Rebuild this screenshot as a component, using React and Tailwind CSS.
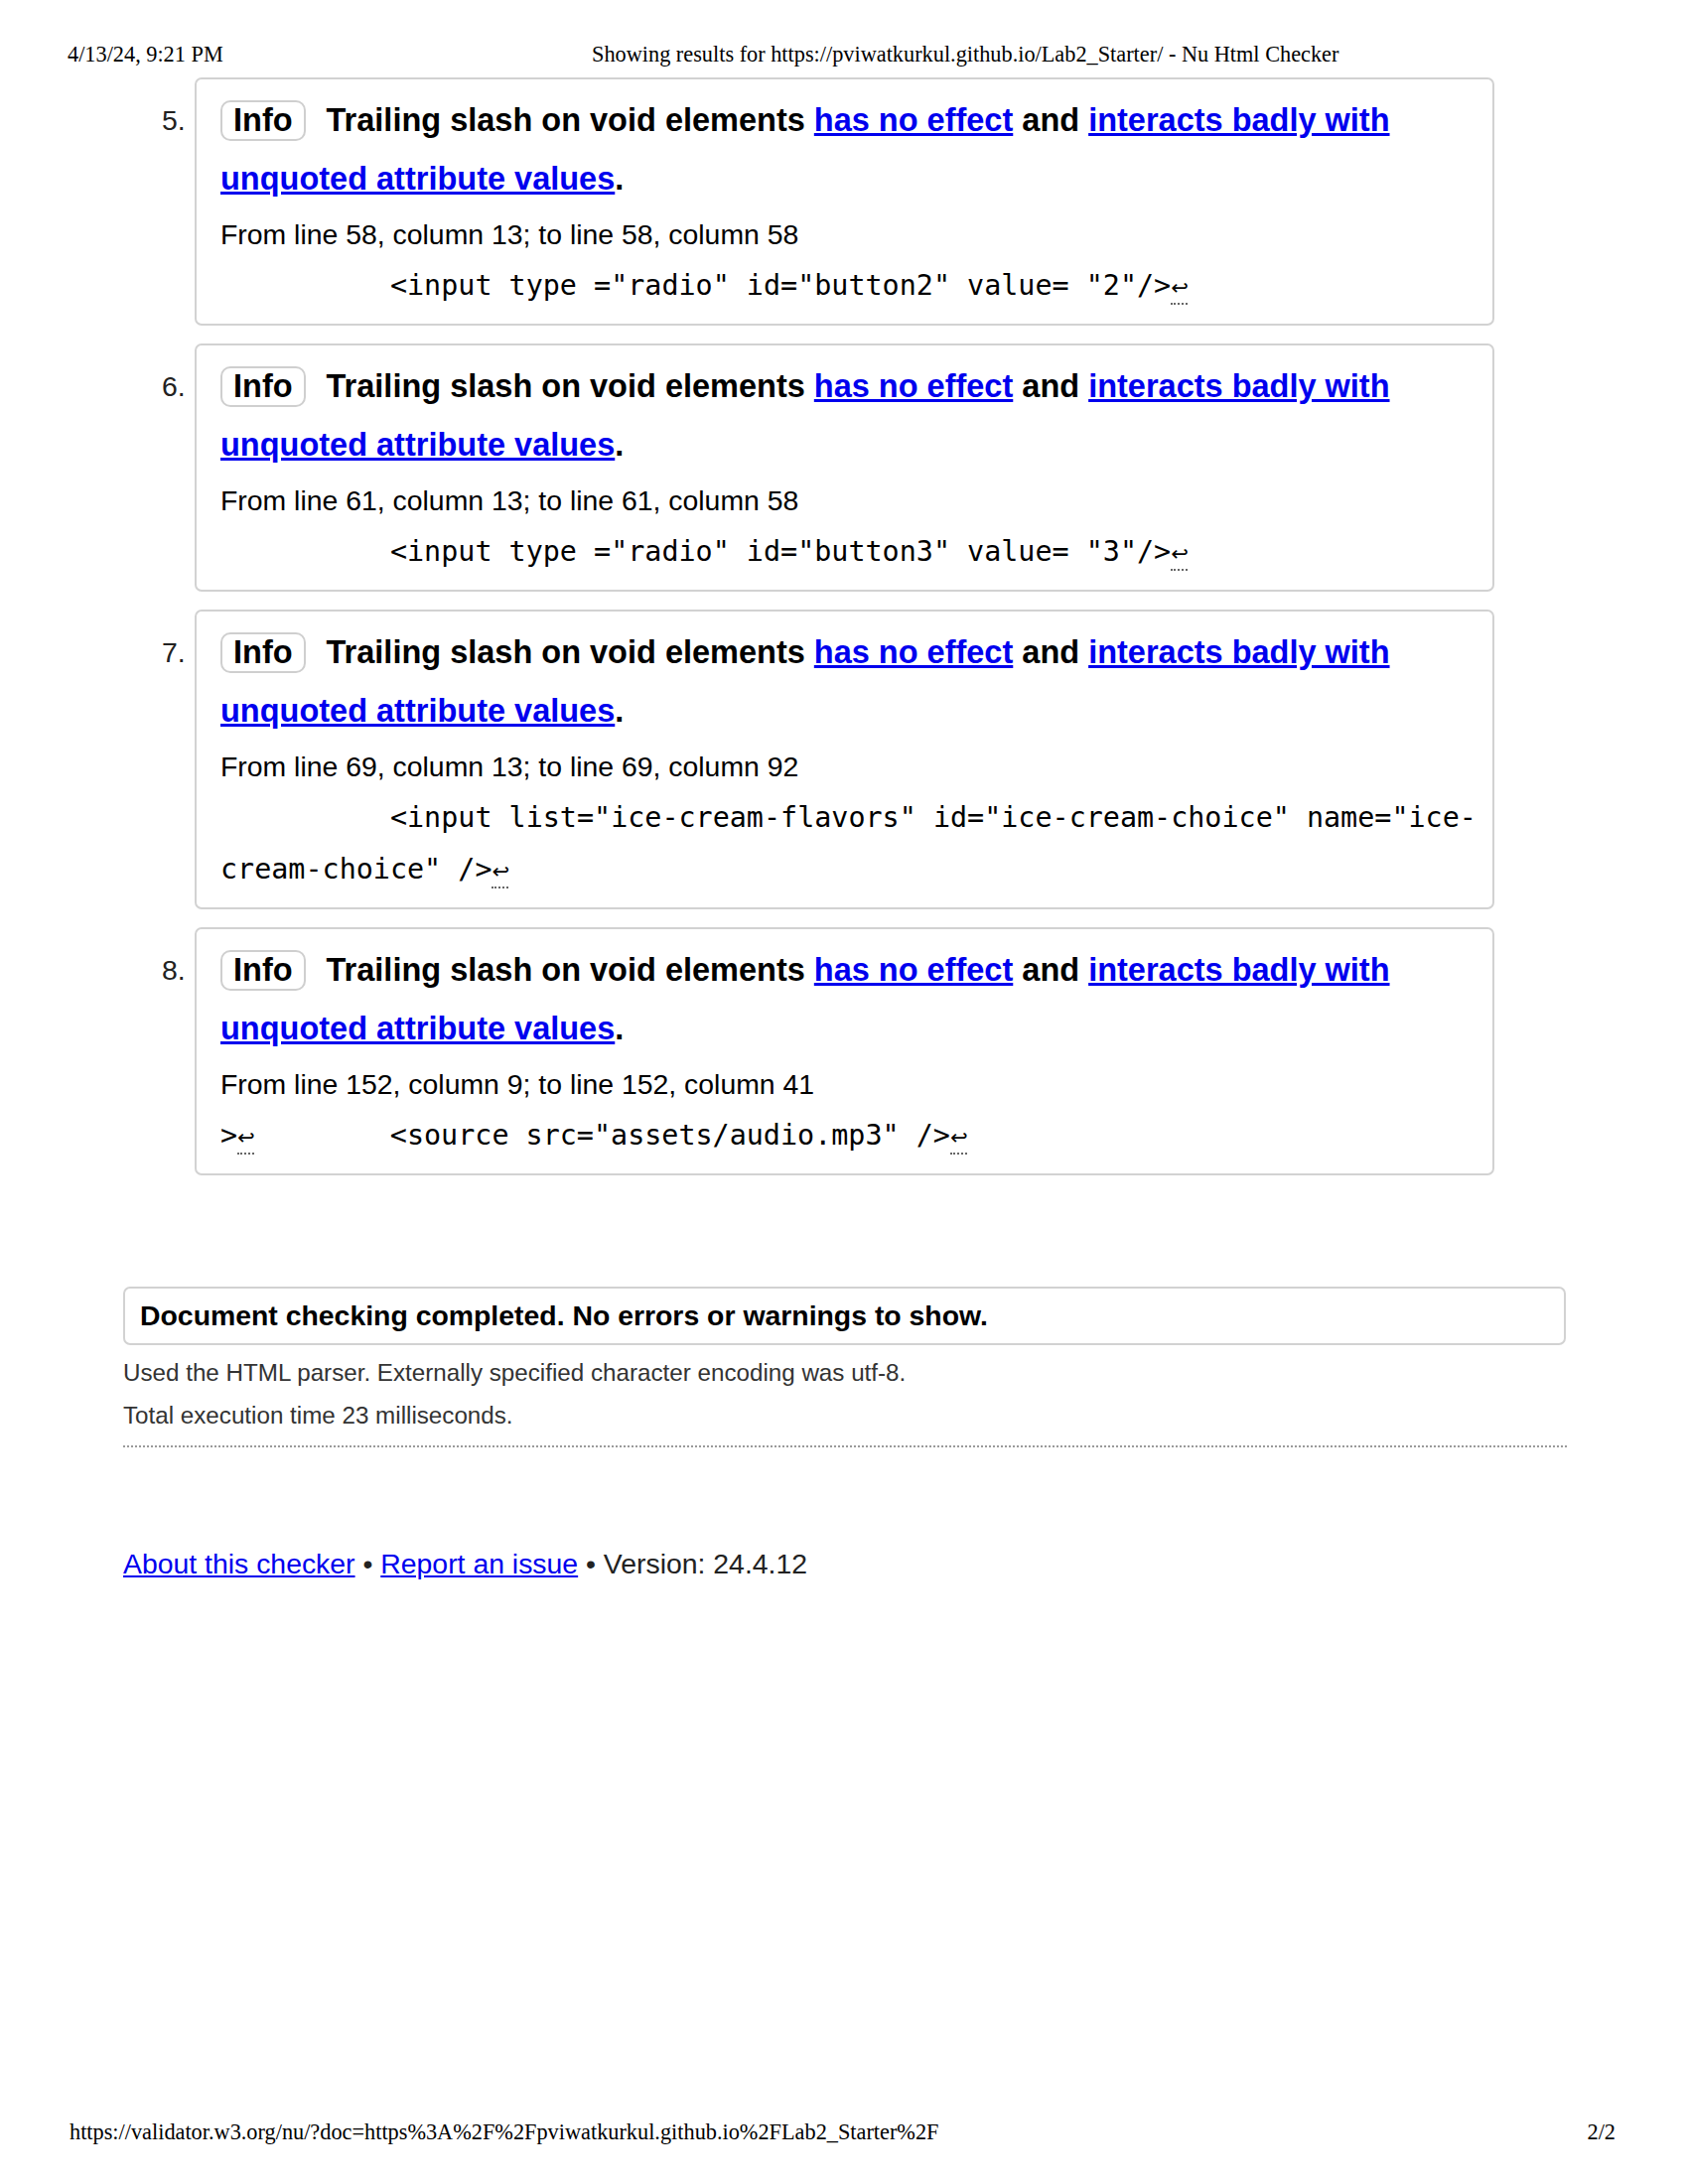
import React from "react";

function NL() {
  return (
    <span className="inline-block w-[17px] text-[21px] leading-none pb-[4px] border-b-2 border-dotted border-[#666] font-['DejaVu_Sans',sans-serif] text-center">
      ↩
    </span>
  );
}

function Item({ n, from, children }) {
  return (
    <li className="flex">
      <div className="w-[33px] shrink-0 pt-[14px] text-[28.4px] leading-[59px] text-[#222]">{n}.</div>
      <div className="w-[1309px] border-2 border-[#d2d2d2] rounded-[7px] pt-[12px] pb-[12px] pl-[24px] pr-[8px]">
        <p className="text-[32.5px] font-bold leading-[59px] text-black">
          <span className="inline-block border-2 border-[#cfcfcf] rounded-[10px] px-[11px] leading-[37px] mr-[21px]">Info</span>
          {"Trailing slash on void elements "}
          <a className="text-[#0000ee] underline">has no effect</a>
          {" and "}
          <a className="text-[#0000ee] underline">interacts badly with unquoted attribute values</a>
          {"."}
        </p>
        <p className="text-[28.4px] leading-[52px] text-black">{from}</p>
        <div className="font-['DejaVu_Sans_Mono',monospace] text-[28.4px] leading-[52px] whitespace-pre text-black">
          {children}
        </div>
      </div>
    </li>
  );
}

export default function App() {
  return (
    <div className="w-[1700px] h-[2200px] bg-white flex flex-col text-black font-['Liberation_Sans',Arial,sans-serif]">
      <header className="flex pt-[42px] pl-[68px] text-[22.3px] leading-[25px] font-['Liberation_Serif','Times_New_Roman',serif] text-black">
        <span className="w-[528px]">4/13/24, 9:21 PM</span>
        <span>Showing results for https://pviwatkurkul.github.io/Lab2_Starter/ - Nu Html Checker</span>
      </header>

      <main className="pl-[124px]">
        <ol className="mt-[11px] pl-[39px] flex flex-col gap-[18px]">
          <Item n={5} from="From line 58, column 13; to line 58, column 58">
            <div>
              {'          <input type ="radio" id="button2" value= "2"/>'}
              <NL />
            </div>
          </Item>
          <Item n={6} from="From line 61, column 13; to line 61, column 58">
            <div>
              {'          <input type ="radio" id="button3" value= "3"/>'}
              <NL />
            </div>
          </Item>
          <Item n={7} from="From line 69, column 13; to line 69, column 92">
            <div>{'          <input list="ice-cream-flavors" id="ice-cream-choice" name="ice-'}</div>
            <div>
              {'cream-choice" />'}
              <NL />
            </div>
          </Item>
          <Item n={8} from="From line 152, column 9; to line 152, column 41">
            <div>
              {">"}
              <NL />
              {'        <source src="assets/audio.mp3" />'}
              <NL />
            </div>
          </Item>
        </ol>

        <div className="mt-[112px] w-[1453px] border-2 border-[#d2d2d2] rounded-[7px] px-[15px] py-[7px] text-[28.4px] leading-[41px] font-bold text-black">
          Document checking completed. No errors or warnings to show.
        </div>
        <p className="mt-[6px] text-[24.2px] leading-[43px] text-[#333]">
          Used the HTML parser. Externally specified character encoding was utf-8.
        </p>
        <p className="text-[24.2px] leading-[43px] text-[#333]">Total execution time 23 milliseconds.</p>
        <div className="mt-[9px] w-[1454px] border-t-2 border-dotted border-[#9a9a9a]"></div>

        <p className="mt-[91px] text-[28.4px] leading-[52px] text-[#222]">
          <a className="text-[#0000ee] underline">About this checker</a>
          {" • "}
          <a className="text-[#0000ee] underline">Report an issue</a>
          {" • Version: 24.4.12"}
        </p>
      </main>

      <footer className="mt-auto flex justify-between pl-[70px] pr-[73px] pb-[40px] text-[22.3px] leading-[25px] font-['Liberation_Serif','Times_New_Roman',serif] text-black">
        <span>https://validator.w3.org/nu/?doc=https%3A%2F%2Fpviwatkurkul.github.io%2FLab2_Starter%2F</span>
        <span>2/2</span>
      </footer>
    </div>
  );
}
